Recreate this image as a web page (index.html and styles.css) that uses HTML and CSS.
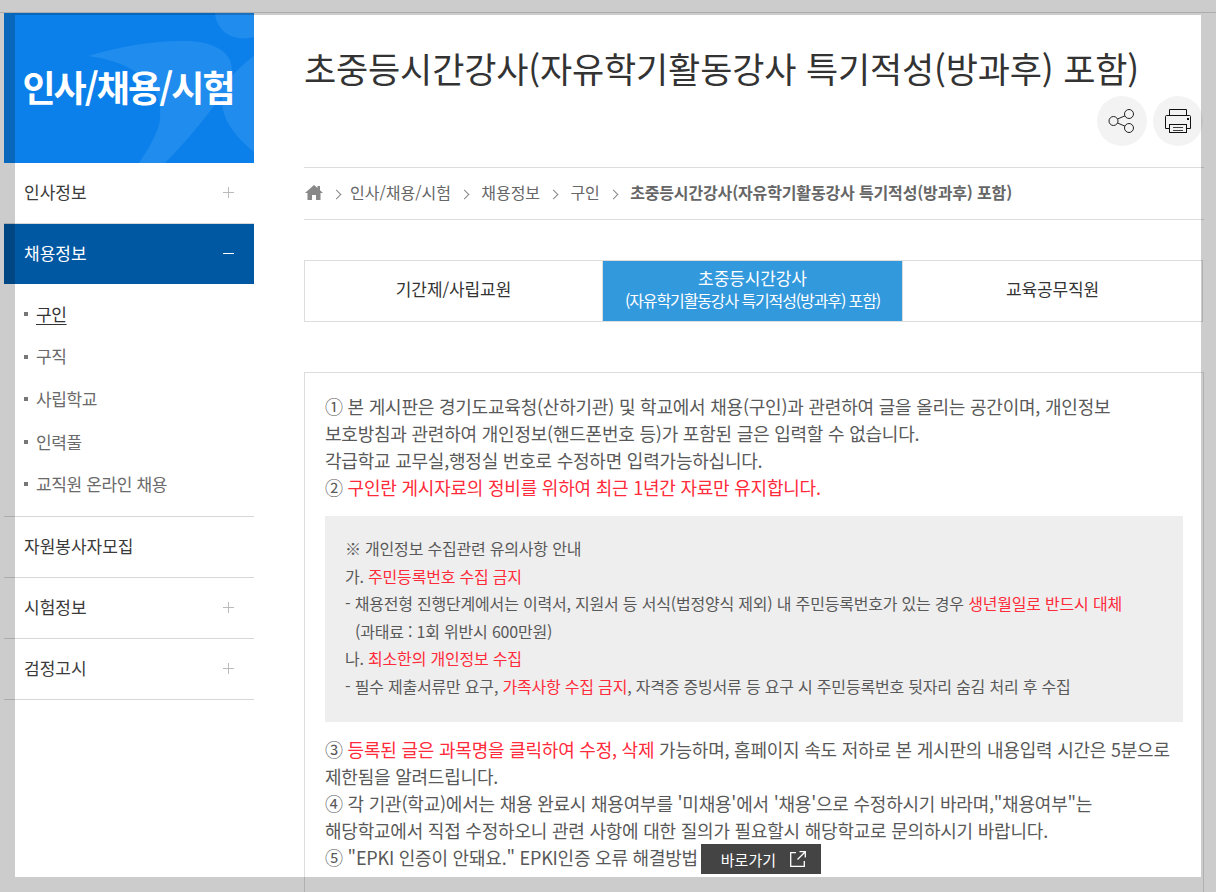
FILE: index.html
```html
<!DOCTYPE html>
<html lang="ko">
<head>
<meta charset="utf-8">
<title>초중등시간강사</title>
<link rel="stylesheet" href="styles.css">
</head>
<body>
<div class="page">
  <aside class="side">
    <div class="hero">
      <svg class="hero-art" viewBox="0 0 250 150" width="250" height="150">
        <path d="M211 0C212 15 225 30 250 24V0Z"/>
        <path d="M84 43C120 32 155 27 183 28C212 29 228 40 228 57C226 70 218 83 209 94C195 113 178 133 161 150H135C147 132 156 116 156 104C158 88 152 72 135 61C120 50 100 45 84 43Z"/>
        <path d="M250 43C230 58 218 72 218 87C218 100 223 117 250 139Z"/>
      </svg>
      <h2 class="hero-title">인사/채용/시험</h2>
    </div>
    <ul class="menu">
      <li class="menu-item"><a>인사정보</a><span class="plus"></span></li>
      <li class="menu-item active"><a>채용정보</a><span class="minus"></span></li>
      <li class="sub">
        <a class="sub-link current">구인</a>
        <a class="sub-link">구직</a>
        <a class="sub-link">사립학교</a>
        <a class="sub-link">인력풀</a>
        <a class="sub-link">교직원 온라인 채용</a>
      </li>
      <li class="menu-item"><a>자원봉사자모집</a></li>
      <li class="menu-item"><a>시험정보</a><span class="plus"></span></li>
      <li class="menu-item"><a>검정고시</a><span class="plus"></span></li>
    </ul>
  </aside>
  <main class="main">
    <h1 class="title">초중등시간강사(자유학기활동강사 특기적성(방과후) 포함)</h1>
    <div class="tools">
      <button class="tool" aria-label="공유">
        <svg width="30" height="30" viewBox="0 0 30 30" fill="none" stroke="#222" stroke-width="1">
          <circle cx="6.5" cy="15" r="4.5"/><circle cx="22" cy="8" r="4.5"/><circle cx="22" cy="22" r="4.5"/>
          <path d="M10.5 13 18 9.8M10.5 17 18 20.2"/>
        </svg>
      </button>
      <button class="tool" aria-label="인쇄">
        <svg width="30" height="30" viewBox="0 0 30 30" fill="none" stroke="#111" stroke-width="1">
          <path d="M6.5 9.500V3.500H23.500V9.500"/>
          <path d="M6.500 22.500H2.500V10.500C2.500 9.900 2.900 9.500 3.500 9.500H26.500C27.100 9.500 27.500 9.900 27.500 10.500V22.500H23.500"/>
          <rect x="6.500" y="18.500" width="17" height="8"/>
          <path d="M10 21.500H20M10 24.500H20" stroke-width=".8"/>
          <rect x="24" y="12" width="2" height="2" fill="#111" stroke="none"/>
        </svg>
      </button>
    </div>
    <nav class="crumbs">
      <svg class="home" width="18" height="15" viewBox="0 0 18 15"><path fill="#888" d="M9 0 0 8h2.500v7h4.500v-5h4v5h4.500V8H18l-3-2.700V1h-2.500v2.100Z"/></svg>
      <span class="crumb">인사/채용/시험</span>
      <span class="crumb">채용정보</span>
      <span class="crumb">구인</span>
      <span class="crumb strong">초중등시간강사(자유학기활동강사 특기적성(방과후) 포함)</span>
    </nav>
    <div class="tabs">
      <a class="tab">기간제/사립교원</a>
      <a class="tab on"><span class="tab-main">초중등시간강사</span><span class="tab-sub">(자유학기활동강사 특기적성(방과후) 포함)</span></a>
      <a class="tab">교육공무직원</a>
    </div>
    <section class="notice">
      <p>① 본 게시판은 경기도교육청(산하기관) 및 학교에서 채용(구인)과 관련하여 글을 올리는 공간이며, 개인정보<br>
      보호방침과 관련하여 개인정보(핸드폰번호 등)가 포함된 글은 입력할 수 없습니다.<br>
      각급학교 교무실,행정실 번호로 수정하면 입력가능하십니다.<br>
      ② <em>구인란 게시자료의 정비를 위하여 최근 1년간 자료만 유지합니다.</em></p>
      <div class="guide">
        ※ 개인정보 수집관련 유의사항 안내<br>
        가. <em>주민등록번호 수집 금지</em><br>
        - 채용전형 진행단계에서는 이력서, 지원서 등 서식(법정양식 제외) 내 주민등록번호가 있는 경우 <em>생년월일로 반드시 대체</em><br>
        <span class="indent">(과태료 : 1회 위반시 600만원)</span><br>
        나. <em>최소한의 개인정보 수집</em><br>
        - 필수 제출서류만 요구, <em>가족사항 수집 금지</em>, 자격증 증빙서류 등 요구 시 주민등록번호 뒷자리 숨김 처리 후 수집
      </div>
      <p>③ <em>등록된 글은 과목명을 클릭하여 수정, 삭제</em> 가능하며, 홈페이지 속도 저하로 본 게시판의 내용입력 시간은 5분으로<br>
      제한됨을 알려드립니다.<br>
      ④ 각 기관(학교)에서는 채용 완료시 채용여부를 '미채용'에서 '채용'으로 수정하시기 바라며,"채용여부"는<br>
      해당학교에서 직접 수정하오니 관련 사항에 대한 질의가 필요할시 해당학교로 문의하시기 바랍니다.<br>
      ⑤ "EPKI 인증이 안돼요." EPKI인증 오류 해결방법 <a class="go">바로가기
        <svg width="18" height="18" viewBox="0 0 18 18" fill="none" stroke="#fff" stroke-width="1.300"><path d="M7 2.700H1.700V16.300H15.300V11M10.500 1.700H16.300V7.500M16.300 1.700 8.500 9.500"/></svg>
      </a></p>
    </section>
  </main>
</div>
<div class="mask"></div>
</body>
</html>
```
FILE: styles.css
```css
* { box-sizing: border-box; }
html, body { margin: 0; padding: 0; height: 100%; overflow: hidden; background: #fff; }
body { font-family: "Noto Sans CJK KR", "Noto Sans", sans-serif; color: #555; }
ul { list-style: none; margin: 0; padding: 0; }
p { margin: 0; }
em { font-style: normal; color: #ff2a3a; }

.page { display: flex; gap: 50px; margin-top: 12px; padding: 0 0 0 4px; border-top: 1px solid #d8d8d8; height: 880px; overflow: hidden; }
.mask { position: fixed; inset: 0; border: 15px solid rgba(0, 0, 0, .2); pointer-events: none; }

.side { width: 250px; flex: none; }
.hero { position: relative; height: 150px; background: #0b80ea; display: flex; align-items: center; justify-content: center; overflow: hidden; padding: 0 2px 4px 0; }
.hero-art { position: absolute; inset: 0; fill: #1f8cee; }
.hero-title { position: relative; margin: 0; color: #fff; font-size: 36px; font-weight: 700; letter-spacing: -1.950px; line-height: 1; white-space: nowrap; }

.menu-item { display: flex; justify-content: space-between; align-items: center; height: 61px; padding: 0 20px 4px 20px; border-bottom: 1px solid #d8d8d8; font-size: 17px; color: #3a3a3a; }
.menu-item.active { background: #0058a3; color: #fff; border-bottom: 0; height: 60px; }
.plus, .minus { position: relative; width: 11px; height: 11px; margin-top: 3px; }
.plus::before, .minus::before { content: ""; position: absolute; left: 0; top: 5px; width: 11px; height: 1px; background: #bbb; }
.plus::after { content: ""; position: absolute; left: 5px; top: 0; width: 1px; height: 11px; background: #bbb; }
.minus::before { background: #fff; }
.sub { display: flex; flex-direction: column; height: 233px; padding: 8px 0 0 20px; border-bottom: 1px solid #d8d8d8; }
.sub-link { position: relative; display: flex; width: max-content; height: 42.600px; margin-left: 12px; align-items: center; font-size: 17px; color: #6a6a6a; letter-spacing: -.35px; }
.sub-link::before { content: ""; position: absolute; left: -12px; top: 20px; width: 4px; height: 4px; background: #777; }
.sub-link.current { color: #333; text-decoration: underline; text-underline-offset: 3px; }

.main { width: 900px; flex: none; }
.title { margin: 0; padding-top: 30px; height: 83px; font-size: 35px; font-weight: 400; line-height: 50px; color: #333; white-space: nowrap; letter-spacing: -.16px; }
.tools { display: flex; justify-content: flex-end; gap: 6px; padding-right: 1px; height: 71px; }
.tool { width: 50px; height: 50px; border: 0; padding: 0; border-radius: 50%; background: #f3f3f3; display: flex; align-items: center; justify-content: center; }
.crumbs { display: flex; align-items: center; height: 53px; border-top: 1px solid #ddd; border-bottom: 1px solid #ddd; font-size: 16px; color: #666; padding-left: 1px; padding-bottom: 4px; }
.home { flex: none; margin-top: 1px; }
.crumb { position: relative; margin-left: 30.300px; }
.crumb:first-of-type { margin-left: 27px; }
.crumb::before { content: ""; position: absolute; left: -20px; top: 11px; width: 6px; height: 6px; border-top: 1px solid #888; border-right: 1px solid #888; transform: rotate(45deg); }
.crumb:first-of-type::before { left: -17px; }
.strong { font-weight: 700; letter-spacing: -.15px; }

.tabs { display: grid; grid-template-columns: 297px 301px 299px; height: 62px; margin-top: 40px; border: 1px solid #ddd; width: 899px; }
.tab { display: flex; flex-direction: column; align-items: center; justify-content: center; font-size: 17px; color: #333; letter-spacing: -.1px; padding-bottom: 6px; }
.tab.on { background: #3399dd; color: #fff; border-left: 1px solid #ddd; border-right: 1px solid #ddd; }
.tab-main { line-height: 23px; }
.tab-sub { font-size: 16px; line-height: 22px; letter-spacing: -1.120px; }

.notice { margin-top: 50px; border: 1px solid #ddd; padding: 20px 20px 0 20px; font-size: 18px; line-height: 27px; letter-spacing: -.22px; color: #595959; height: 600px; }
.guide { margin: 15px 0 14px; height: 206px; padding: 19px 20px 0 20px; background: #eee; font-size: 16px; line-height: 27.500px; white-space: nowrap; letter-spacing: -.2px; }
.indent { padding-left: 10px; }
.go { display: inline-flex; align-items: center; gap: 13px; width: 120px; height: 30px; vertical-align: top; margin-left: -2px; padding-left: 20px; background: #444; color: #fff; font-size: 15px; letter-spacing: 0; }
```
